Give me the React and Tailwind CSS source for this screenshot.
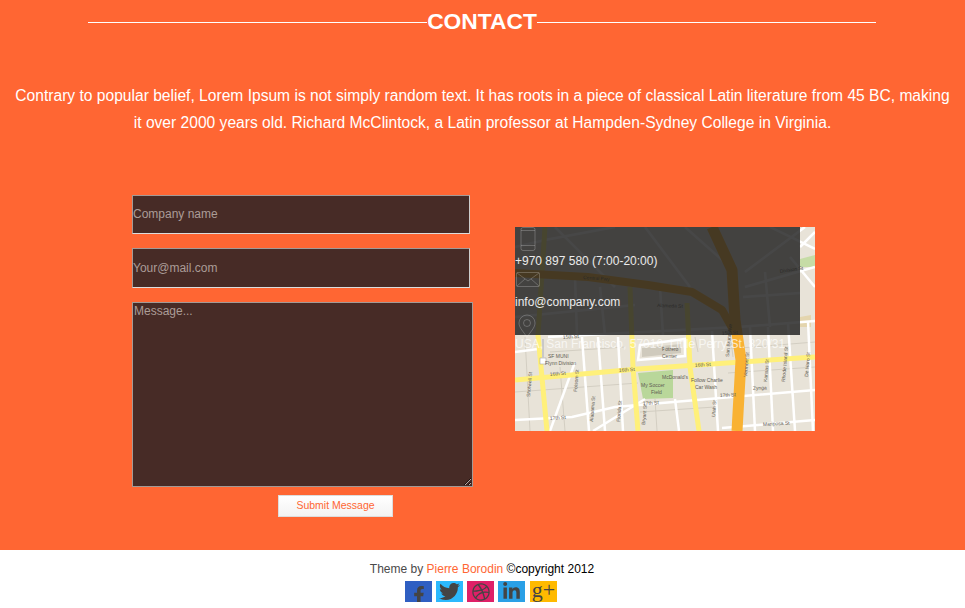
import { FaFacebookF, FaTwitter, FaDribbble, FaLinkedinIn } from 'react-icons/fa';

function MapPicture() {
  const whiteRoads = [
    'M33 110 L223 100 L300 94', 'M0 193 L57 190 L100 180 L300 163', 'M207 201 L300 193', 'M0 90 L120 78',
    'M230 60 L300 40', 'M67 110 L74 204', 'M83 110 L90 204', 'M103 110 L108 204', 'M160 172 L164 204',
    'M197 104 L203 204', 'M235 100 L240 204', 'M253 100 L258 204', 'M273 96 L280 204', 'M293 94 L298 204',
    'M123 133 L170 129 L170 112 L125 118 Z', 'M60 135 L35 204', 'M130 172 L78 204', 'M255 0 L300 22',
    'M230 45 L290 0', 'M40 0 L100 60', 'M130 0 L175 60', 'M170 0 L215 40', 'M60 50 L62 108', 'M145 60 L148 108',
    'M0 125 L23 122', 'M250 45 L255 100', 'M285 20 L300 5', 'M275 30 L300 60', 'M0 20 L30 13 L100 0',
    'M85 60 L90 108', 'M228 70 L285 66',
  ];
  const thinRoads = [
    'M0 165 L123 156', 'M35 125 L110 120', 'M213 122 L300 115', 'M125 185 L200 180', 'M213 146 L300 140',
    'M45 140 L50 204', 'M140 172 L142 204', 'M180 110 L183 125', 'M10 110 L15 204', 'M215 105 L218 130',
  ];
  const labels = [
    ['16th St', 35, 149, -5], ['16th St', 104, 145, -4], ['16th St', 180, 140, -4],
    ['17th St', 35, 193, -4], ['17th St', 128, 178, -3], ['17th St', 205, 170, -3],
    ['Central Fwy', 68, 52, 4], ['Alameda St', 142, 80, 2], ['15th St', 48, 112, -4],
    ['15th St', 207, 108, -4], ['Division St', 265, 46, -8], ['Zynga', 238, 163, -3], ['Mariposa St', 248, 199, -3],
    ['SF MUNI', 33, 131, 0], ['Flynn Division', 30, 138, 0], ['My Soccer', 126, 160, 0], ['Field', 136, 167, 0],
    ["McDonald's", 147, 152, 0], ['Potrero', 147, 124, 0], ['Center', 147, 131, 0],
    ['Follow Charlie', 176, 155, 0], ['Car Wash', 180, 162, 0],
  ];
  const uprightLabels = [
    ['Shotwell St', 15, 170], ['Folsom St', 62, 165], ['Alabama St', 78, 195], ['Florida St', 105, 195],
    ['Bryant St', 130, 198], ['Utah St', 200, 190], ['San Bruno Ave', 214, 130], ['Vermont St', 232, 150],
    ['Kansas St', 252, 155], ['Rhode Island St', 270, 155], ['De Haro St', 293, 150],
  ];
  return (
    <svg viewBox="0 0 300 204" className="block w-[300px] h-[204px]">
      <rect width="300" height="204" fill="#e8e3d8" />
      <path d="M123 146 L158 143 L158 171 L128 172 Z" fill="#b9d79a" />
      <path d="M127 121 L166 117 L166 126 L127 130 Z" fill="#cfcabd" />
      <path d="M285 90 L296 88 L296 100 L285 100 Z" fill="#e4d5ae" />
      <path d="M285 32 L300 28 L300 40 L285 40 Z" fill="#c6dca6" />
      <g fill="none" stroke="#d3cec2" strokeWidth="1">
        {thinRoads.map((d) => <path key={d} d={d} />)}
      </g>
      <g fill="none" stroke="#ffffff" strokeWidth="2.5">
        {whiteRoads.map((d) => <path key={d} d={d} />)}
      </g>
      <g fill="none" stroke="#fff07a" strokeWidth="5">
        <path d="M30 0 L23 108 L32 204" />
        <path d="M115 60 L118 140 L123 204" />
        <path d="M172 76 L175 140 L184 204" />
        <path d="M0 153 L123 142 L300 130" />
      </g>
      <g fill="none" stroke="#f9b233" strokeLinejoin="round">
        <path d="M197 0 L217 43 L220 93 L226 133 L222 204" strokeWidth="11" />
        <path d="M0 46 L73 50 L133 58 L177 65 L207 83 L220 106" strokeWidth="8" />
      </g>
      <rect x="25" y="131" width="6" height="6" fill="#ffffff" stroke="#999999" strokeWidth="0.5" />
      <rect x="27" y="112" width="2" height="19" fill="#c8c8c8" />
      <g fill="#5f5b52" fontSize="5" fontFamily="'Liberation Sans', sans-serif">
        {labels.map(([t, x, y, r]) => (
          <text key={t + x} x={x} y={y} transform={`rotate(${r} ${x} ${y})`}>{t}</text>
        ))}
        {uprightLabels.map(([t, x, y]) => (
          <text key={t} x={x} y={y} transform={`rotate(-85 ${x} ${y})`}>{t}</text>
        ))}
      </g>
    </svg>
  );
}

function PhoneIcon() {
  return (
    <svg viewBox="0 0 16 24" className="block ml-[5px] w-[16px] h-[24px]" fill="none" stroke="#ffffff" strokeOpacity="0.22" strokeWidth="1">
      <rect x="1" y="0.5" width="14" height="23" rx="2" />
      <path d="M1 3.5 H15 M1 18.5 H15" />
    </svg>
  );
}

function MailIcon() {
  return (
    <svg viewBox="0 0 24 15" className="block ml-[1px] w-[24px] h-[15px]" fill="none" stroke="#ffffff" strokeOpacity="0.22" strokeWidth="1">
      <rect x="0.5" y="0.5" width="23" height="14" rx="1" />
      <path d="M1 1 L12 9 L23 1 M1 14 L9 7 M23 14 L15 7" />
    </svg>
  );
}

function PinIcon() {
  return (
    <svg viewBox="0 0 18 24" className="block ml-[3px] w-[18px] h-[24px]" fill="none" stroke="#ffffff" strokeOpacity="0.22" strokeWidth="1">
      <path d="M9 23.5 C6 18 1 14 1 9 A8 8 0 0 1 17 9 C17 14 12 18 9 23.5 Z" />
      <circle cx="9" cy="9" r="3.5" />
    </svg>
  );
}

export default function App() {
  return (
    <div className="min-h-[608px] font-['Liberation_Sans',Arial,sans-serif] bg-white">
      <section className="h-[550px] bg-[#ff6633] text-white">
        <div className="flex items-center justify-center pt-[8px] h-[35px] ml-[88px] w-[788px]">
          <div className="flex-1 h-px mt-px bg-white" />
          <h2 className="text-[22.8px] leading-[27px] font-bold">CONTACT</h2>
          <div className="flex-1 h-px mt-px bg-white" />
        </div>

        <p className="mt-[47px] px-[12px] text-center text-[15.6px] leading-[27px]">
          Contrary to popular belief, Lorem Ipsum is not simply random text. It has roots in a piece of classical Latin literature from 45 BC, making it over 2000 years old. Richard McClintock, a Latin professor at Hampden-Sydney College in Virginia.
        </p>

        <div className="flex mt-[59px] pl-[132px]">
          <form className="w-[341px] flex flex-col">
            <input
              placeholder="Company name"
              className="w-[338px] h-[39px] pb-[2px] bg-[#472b26] border border-t-[#a39a96] border-l-[#a39a96] border-r-[#ccc] border-b-[#ddd] text-[12px] text-white placeholder:text-[#ab9c97] outline-none"
            />
            <input
              placeholder="Your@mail.com"
              className="mt-[14px] w-[338px] h-[40px] bg-[#472b26] border border-t-[#a39a96] border-l-[#a39a96] border-r-[#ccc] border-b-[#ddd] text-[12px] text-white placeholder:text-[#ab9c97] outline-none"
            />
            <textarea
              placeholder="Message..."
              className="block mt-[14px] w-[341px] h-[185px] p-px bg-[#472b26] border border-[#a39a96] text-[12px] leading-[14px] text-white placeholder:text-[#ab9c97] outline-none"
            />
            <button
              type="button"
              className="self-start mt-[8px] ml-[146px] w-[115px] h-[22px] bg-linear-to-b from-white to-[#f3f3f3] border border-[#ddd] text-[10.5px] text-[#ff6633]"
            >
              Submit Message
            </button>
          </form>

          <div className="relative ml-[42px] mt-[32px] w-[300px] h-[204px]">
            <MapPicture />
            <div className="absolute left-0 top-0 w-[285px] h-[108px] bg-[#1f1f1f]/82 text-[12px] leading-[14px] text-white/90">
              <PhoneIcon />
              <div className="mt-[3px]">+970 897 580 (7:00-20:00)</div>
              <div className="mt-[4px]"><MailIcon /></div>
              <div className="mt-[8px]">info@company.com</div>
              <div className="mt-[5px]"><PinIcon /></div>
              <div className="-mt-px whitespace-nowrap text-white/70">USA, San Francisco, 57010, Little Perry St. 820/31</div>
            </div>
          </div>
        </div>
      </section>

      <footer className="h-[58px] flex flex-col items-center pt-[12px] pr-[3px] text-[12px] leading-[14px]">
        <div className="ml-[2px] text-[#4a4a4a]">
          Theme by <a className="text-[#ff6633]">Pierre Borodin</a> <span className="text-black">©copyright 2012</span>
        </div>
        <div className="flex gap-[4px] mt-[5px] text-[#444]">
          <span className="w-[27px] h-[21px] bg-[#2f5fc2] flex items-end justify-center overflow-hidden"><FaFacebookF className="text-[18px] -mb-[2px]" /></span>
          <span className="w-[27px] h-[21px] bg-[#2cb9fd] flex items-center justify-center"><FaTwitter className="text-[21px]" /></span>
          <span className="w-[27px] h-[21px] bg-[#df2067] flex items-center justify-center"><FaDribbble className="text-[18px]" /></span>
          <span className="w-[27px] h-[21px] bg-[#2aa0e6] flex items-center justify-center"><FaLinkedinIn className="text-[19px]" /></span>
          <span className="ml-px w-[27px] h-[21px] bg-[#ffba00] flex items-start justify-center font-['Liberation_Serif',serif] text-[22px] leading-[17px]">g+</span>
        </div>
      </footer>
    </div>
  );
}
